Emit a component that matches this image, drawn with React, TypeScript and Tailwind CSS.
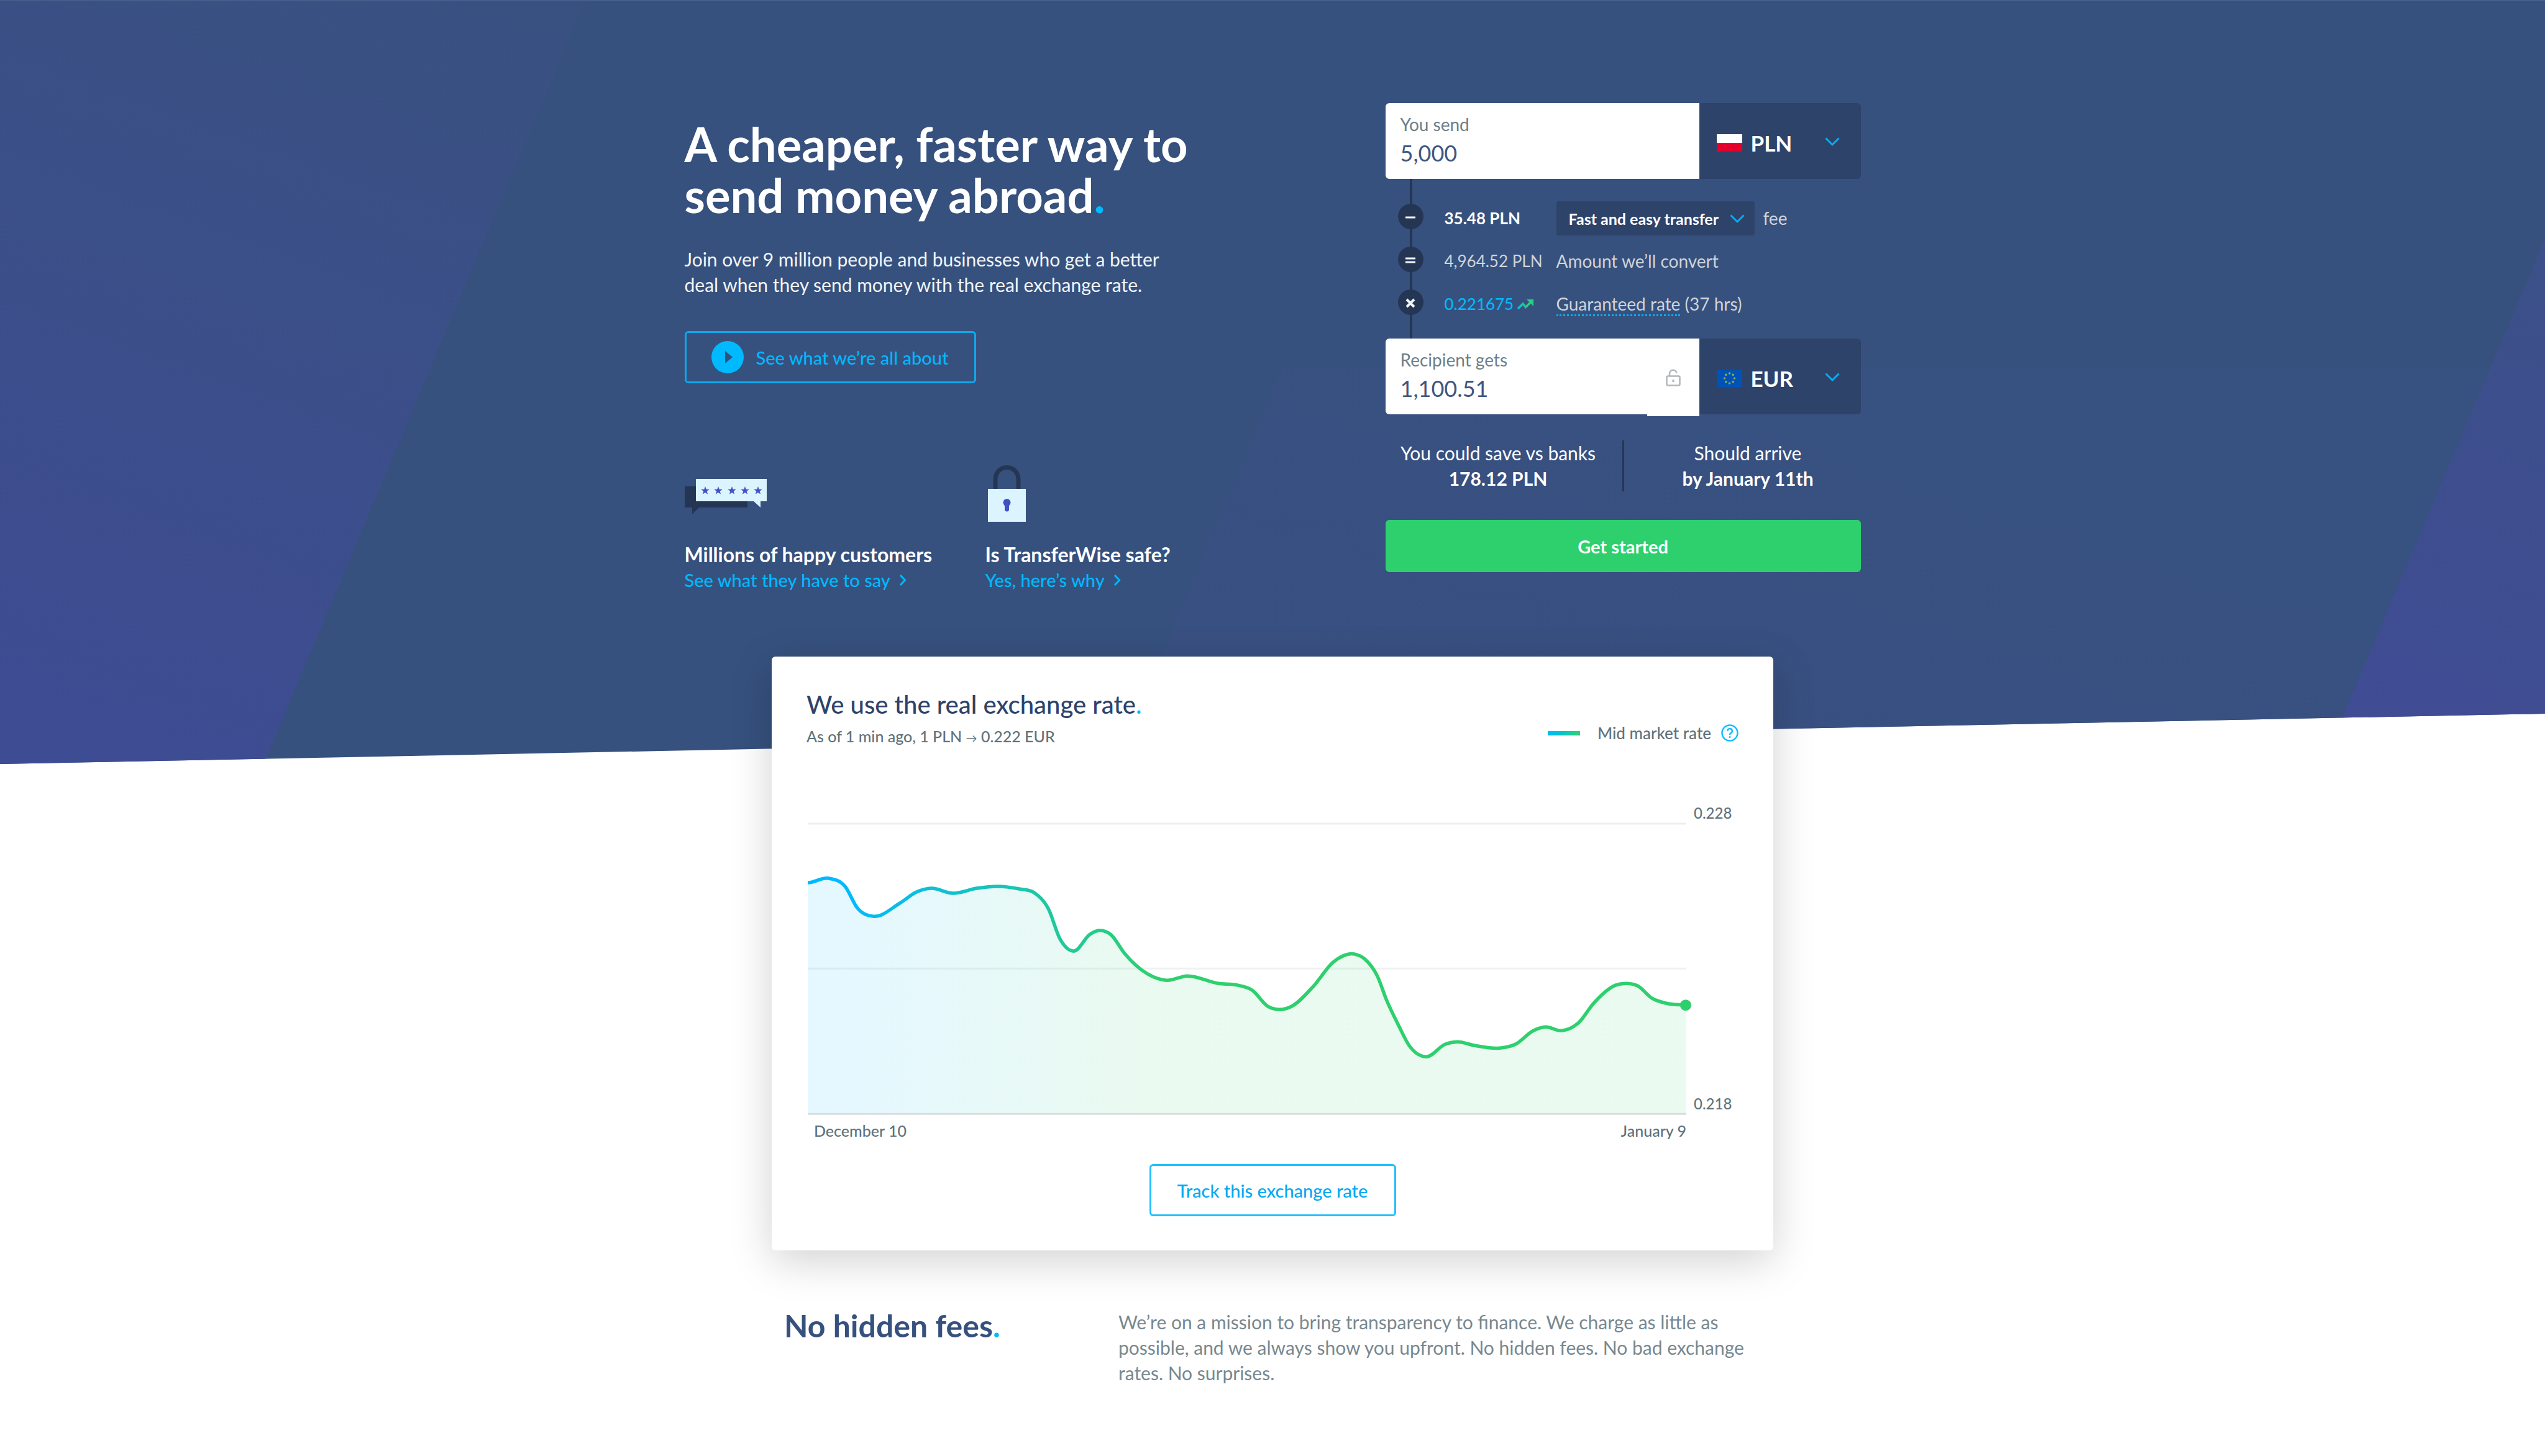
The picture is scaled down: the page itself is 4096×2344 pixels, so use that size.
import React from "react";

const ratePoints: [number, number][] = [
  [0, 95], [34, 88], [60, 101], [80, 136], [105, 149], [148, 128], [175, 110], [198, 104],
  [233, 112], [272, 104], [306, 101], [340, 105], [364, 111], [387, 137], [406, 186], [428, 205],
  [454, 178], [469, 172], [488, 179], [509, 208], [547, 242], [577, 252], [610, 245], [660, 257],
  [692, 260], [715, 268], [740, 294], [758, 299], [778, 294], [813, 262], [845, 223], [880, 210],
  [896, 218], [916, 245], [931, 284], [949, 322], [968, 358], [995, 375], [1025, 355], [1044, 351],
  [1073, 357], [1113, 361], [1138, 355], [1167, 333], [1186, 327], [1213, 333], [1240, 320],
  [1264, 289], [1299, 260], [1317, 257], [1335, 261], [1358, 281], [1381, 289], [1412, 292],
];

/** Draws a smooth curve through the points, with slopes weighted by their spacing in x. */
function smoothPath(points: [number, number][]) {
  const last = points.length - 1;
  const slope = (i: number) => (points[i + 1][1] - points[i][1]) / (points[i + 1][0] - points[i][0]);
  const tangents = points.map((_, i) => {
    if (i === 0) return 0;
    if (i === last) return slope(last - 1);
    const before = points[i][0] - points[i - 1][0];
    const after = points[i + 1][0] - points[i][0];
    return (slope(i - 1) * after + slope(i) * before) / (before + after);
  });
  let d = `M${points[0][0]} ${points[0][1]}`;
  for (let i = 0; i < last; i++) {
    const [x1, y1] = points[i];
    const [x2, y2] = points[i + 1];
    const third = (x2 - x1) / 3;
    d += ` C${(x1 + third).toFixed(1)} ${(y1 + tangents[i] * third).toFixed(1)} ${(x2 - third).toFixed(1)} ${(y2 - tangents[i + 1] * third).toFixed(1)} ${x2} ${y2}`;
  }
  return d;
}

function HeroBackdrop() {
  return (
    <svg
      className="absolute inset-x-0 top-0 -z-10 h-[1230px] w-full"
      viewBox="0 0 4096 1230"
      preserveAspectRatio="none"
      aria-hidden="true"
    >
      <defs>
        <clipPath id="hero-shape">
          <path d="M0 0H4096V1149L0 1230Z" />
        </clipPath>
        <linearGradient id="band-left" gradientUnits="userSpaceOnUse" x1="760" y1="0" x2="300" y2="1260">
          <stop offset="0" stopColor="#395181" />
          <stop offset="1" stopColor="#3e4c93" />
        </linearGradient>
        <linearGradient id="band-right" gradientUnits="userSpaceOnUse" x1="4150" y1="380" x2="3850" y2="1160">
          <stop offset="0" stopColor="#3b5088" />
          <stop offset="1" stopColor="#404c94" />
        </linearGradient>
        <linearGradient id="band-centre" gradientUnits="userSpaceOnUse" x1="2600" y1="594" x2="2400" y2="1180">
          <stop offset="0" stopColor="#375180" />
          <stop offset="1" stopColor="#395082" />
        </linearGradient>
      </defs>
      <g clipPath="url(#hero-shape)">
        <path fill="#36517e" d="M0 0H4096V1230H0Z" />
        <path fill="url(#band-left)" d="M0 0H942L424 1230H0Z" />
        <path fill="url(#band-centre)" d="M2064 594H4009L3740 1230H1796Z" />
        <path fill="url(#band-right)" d="M4096 384V1230H3738Z" />
        <path fill="#4b6390" d="M0 0H4096V1H0Z" />
      </g>
    </svg>
  );
}

function ReviewsIcon() {
  return (
    <svg className="block h-[92px] w-[134px]" viewBox="0 0 134 92" aria-hidden="true">
      <path fill="#253655" d="M0 34H101V68H23L12 79V68H0Z" />
      <path fill="#dcf4ff" d="M18 22H132V58H122V68L111 58H18Z" />
      {[33, 54, 76, 97, 118].map((x) => (
        <path
          key={x}
          fill="#3f51c4"
          transform={`translate(${x} 41)`}
          d="M0 -7L1.7 -2.3 6.7 -2.2 2.7 .9 4.1 5.7 0 2.8 -4.1 5.7 -2.7 .9 -6.7 -2.2 -1.7 -2.3Z"
        />
      ))}
    </svg>
  );
}

function PadlockIcon() {
  return (
    <svg className="block h-[92px] w-[66px]" viewBox="0 0 66 92" aria-hidden="true">
      <path fill="none" stroke="#253655" strokeWidth="7" d="M16 40V22A18.500 18.500 0 0 1 53 22V40" />
      <path fill="#dcf4ff" d="M4 38H65V91H4Z" />
      <circle cx="34.500" cy="60" r="6" fill="#3f51c4" />
      <path stroke="#3f51c4" strokeWidth="7" strokeLinecap="round" d="M34.500 62V71" />
    </svg>
  );
}

function ChevronDown({ className = "" }: { className?: string }) {
  return (
    <svg className={`block h-4 w-6 shrink-0 ${className}`} viewBox="0 0 24 16" fill="none" aria-hidden="true">
      <path d="M1.500 2.500L12 13L22.500 2.500" stroke="#00b0f5" strokeWidth="3" />
    </svg>
  );
}

function ChevronRight() {
  return (
    <svg className="block h-5 w-3 shrink-0" viewBox="0 0 12 20" fill="none" aria-hidden="true">
      <path d="M2 2L9.500 10L2 18" stroke="#00b9ff" strokeWidth="3" />
    </svg>
  );
}

function PolishFlag() {
  return (
    <svg className="block h-7 w-[41px] shrink-0" viewBox="0 0 41 28" aria-hidden="true">
      <path fill="#fff" d="M0 0H41V14H0Z" />
      <path fill="#e4002b" d="M0 14H41V28H0Z" />
    </svg>
  );
}

function EuropeanFlag() {
  return (
    <svg className="block h-7 w-[41px] shrink-0" viewBox="0 0 41 28" aria-hidden="true">
      <path fill="#0052b4" d="M0 0H41V28H0Z" />
      {Array.from({ length: 8 }, (_, i) => (
        <circle
          key={i}
          cx={20.5 + 8 * Math.sin((i * Math.PI) / 4)}
          cy={14 - 8 * Math.cos((i * Math.PI) / 4)}
          r="1.8"
          fill="#8fae45"
        />
      ))}
    </svg>
  );
}

function CurrencyPicker({ id, label, value, children }: { id: string; label: string; value: string; children: React.ReactNode }) {
  return (
    <div className="flex w-[260px] shrink-0 items-center rounded-r-md bg-[#2e4369] pt-1.5 pr-[34px] pl-7">
      {children}
      <select
        id={id}
        aria-label={label}
        defaultValue={value}
        className="ml-3.5 min-w-0 flex-1 appearance-none bg-transparent text-[35px] leading-10 font-bold text-white outline-none"
      >
        <option>PLN</option>
        <option>EUR</option>
      </select>
      <ChevronDown className="mb-1" />
    </div>
  );
}

function AmountInput({ id, label, value }: { id: string; label: string; value: string }) {
  return (
    <div className="flex min-w-0 flex-1 flex-col gap-1.5 py-[18px] pl-6">
      <label htmlFor={id} className="text-[28px] leading-8 text-[#6c7f87]">
        {label}
      </label>
      <input
        id={id}
        defaultValue={value}
        className="h-12 w-full bg-transparent text-[36px] leading-[48px] text-[#3f5680] outline-none"
      />
    </div>
  );
}

function Operator({ d, width }: { d: string; width: number }) {
  return (
    <span className="relative ml-5 flex size-[41px] shrink-0 items-center justify-center rounded-full bg-[#253655]">
      <svg className="size-5" viewBox="0 0 20 20" fill="none" aria-hidden="true">
        <path d={d} stroke="#f2f5f7" strokeWidth={width} />
      </svg>
    </span>
  );
}

function Calculator() {
  return (
    <form className="w-[765px] shrink-0 text-[28px] leading-[41px]" onSubmit={(e) => e.preventDefault()}>
      <div className="flex h-[122px]">
        <div className="flex min-w-0 flex-1 rounded-l-md bg-white">
          <AmountInput id="send" label="You send" value="5,000" />
        </div>
        <CurrencyPicker id="send-currency" label="Currency you send" value="PLN">
          <PolishFlag />
        </CurrencyPicker>
      </div>

      <div className="relative pt-[26px] pb-6 text-[#d0d4da]">
        <div className="absolute inset-y-0 left-[39px] w-1 bg-[#253655]" />
        <div className="flex h-[69px] items-center">
          <Operator d="M2 11H18" width={3} />
          <span className="ml-[34px] w-[180px] pt-1.5 text-[26px] font-bold text-white">35.48 PLN</span>
          <span className="flex items-center pt-1.5">
            <span className="flex h-[55px] w-[319px] items-center rounded-sm bg-[#2e4369] pr-4 pl-5">
              <select
                aria-label="Transfer type"
                className="min-w-0 flex-1 appearance-none bg-transparent text-[25px] leading-8 font-bold text-white outline-none"
              >
                <option>Fast and easy transfer</option>
                <option>Low cost transfer</option>
              </select>
              <ChevronDown />
            </span>
            <span className="ml-3.5">fee</span>
          </span>
        </div>
        <div className="flex h-[69px] items-center">
          <Operator d="M2 8H18M2 14H18" width={3} />
          <span className="ml-[34px] w-[180px] pt-1.5 text-[26px]">4,964.52 PLN</span>
          <span className="pt-1.5">Amount we’ll convert</span>
        </div>
        <div className="flex h-[69px] items-center">
          <Operator d="M4 5L16 17M16 5L4 17" width={4} />
          <span className="ml-[34px] flex w-[180px] items-center gap-1.5 pt-1.5 text-[26px] font-medium text-[#00b9ff]">
            0.221675
            <svg className="h-4 w-[26px] shrink-0" viewBox="0 0 26 16" fill="none" aria-hidden="true">
              <defs>
                <linearGradient id="trend" x1="0" x2="1" y1="0" y2="0">
                  <stop offset="0" stopColor="#0bbfe0" />
                  <stop offset="0.8" stopColor="#2ed06e" />
                </linearGradient>
              </defs>
              <path d="M1 15L9 7L13.500 12.500L22 4" stroke="url(#trend)" strokeWidth="3.500" />
              <path d="M15 0H26V11Z" fill="#27cf80" />
            </svg>
          </span>
          <span className="pt-1.5">
            <a href="#rate" className="inline-block border-b-3 border-dotted border-[#00b0f5] leading-[34px]">
              Guaranteed rate
            </a>{" "}
            (37 hrs)
          </span>
        </div>
      </div>

      <div className="flex h-[122px]">
        <div className="flex min-w-0 flex-1 rounded-l-md bg-white">
          <AmountInput id="receive" label="Recipient gets" value="1,100.51" />
          <button type="button" aria-label="Lock amount" className="-mb-[3px] flex w-[84px] items-center justify-center bg-white">
            <svg className="h-7 w-6" viewBox="0 0 24 28" fill="none" stroke="#b4b7ba" strokeWidth="2.500" aria-hidden="true">
              <rect x="1.500" y="11.500" width="21" height="15" rx="2" />
              <path d="M6 11V7A5.800 5.800 0 0 1 17.500 6.500" />
              <path d="M12 17V21" strokeWidth="3" />
            </svg>
          </button>
        </div>
        <CurrencyPicker id="receive-currency" label="Currency received" value="EUR">
          <EuropeanFlag />
        </CurrencyPicker>
      </div>

      <div className="mt-[42px] flex text-center text-[30px] text-white">
        <p className="flex-1">
          You could save vs banks
          <br />
          <strong>178.12 PLN</strong>
        </p>
        <div className="mx-[18px] w-[3px] bg-[#253655]" />
        <p className="flex-1">
          Should arrive
          <br />
          <strong>by January 11th</strong>
        </p>
      </div>

      <button type="submit" className="mt-[46px] block h-[84px] w-full rounded-md bg-[#2ed06e] text-[29px] font-bold text-white">
        Get started
      </button>
    </form>
  );
}

function RateChart() {
  const line = smoothPath(ratePoints);
  return (
    <div className="mt-[122px] ml-0.5 flex gap-3">
      <div className="min-w-0 flex-1">
        <svg className="block h-auto w-full overflow-visible" viewBox="0 0 1413 467" role="img" aria-label="Mid market rate over the last month">
          <defs>
            <linearGradient id="rate" gradientUnits="userSpaceOnUse" x1="0" x2="560" y1="0" y2="0">
              <stop offset="0" stopColor="#00b9ff" />
              <stop offset="0.1" stopColor="#00b9ff" />
              <stop offset="1" stopColor="#2ed06e" />
            </linearGradient>
          </defs>
          <path d="M0 0H1413" stroke="#eeefef" strokeWidth="3" />
          <path d="M0 233H1413" stroke="#f0f2f2" strokeWidth="3" />
          <path d={`${line} V467 H0 Z`} fill="url(#rate)" fillOpacity="0.1" />
          <path d="M0 467H1413" stroke="#dadedd" strokeWidth="3" />
          <path d={line} fill="none" stroke="url(#rate)" strokeWidth="5.500" />
          <circle cx="1412" cy="292" r="9" fill="#2ed06e" />
        </svg>
        <div className="mt-[11px] flex justify-between pl-2.5">
          <span>December 10</span>
          <span>January 9</span>
        </div>
      </div>
      <div className="-mt-[33px] mb-[43px] flex w-[72px] flex-col justify-between text-[24px]">
        <span>0.228</span>
        <span>0.218</span>
      </div>
    </div>
  );
}

function RateCard() {
  return (
    <section className="rounded-md bg-white px-14 pt-[54px] pb-[55px] text-[25px] leading-8 font-medium text-[#5f727b] shadow-[0_17px_68px_rgba(0,0,0,0.18)]">
      <div className="flex items-end justify-between">
        <div>
          <h2 className="text-[40px] leading-[46px] font-medium text-[#2e4369]">
            We use the real exchange rate<span className="text-[#00b9ff]">.</span>
          </h2>
          <p className="mt-3">
            As of 1 min ago, 1 PLN <span className="text-[18px]">→</span> 0.222 EUR
          </p>
        </div>
        <div className="mb-2 flex items-center">
          <span className="h-[7px] w-[52px] bg-linear-to-r from-[#00b9ff] to-[#2ed06e]" />
          <span className="ml-7 text-[26px]">Mid market rate</span>
          <button type="button" aria-label="About the mid market rate" className="ml-4">
            <svg className="block size-7" viewBox="0 0 28 28" fill="none" stroke="#17bdff" strokeWidth="2.500" aria-hidden="true">
              <circle cx="14" cy="14" r="12.500" />
              <path d="M10.300 11.200A3.800 3.800 0 1 1 15.800 14.200Q14 15.200 14 17" />
              <circle cx="14" cy="20.500" r="1.600" fill="#17bdff" stroke="none" />
            </svg>
          </button>
        </div>
      </div>
      <RateChart />
      <div className="mt-[38px] flex justify-center">
        <button type="button" className="h-[84px] w-[397px] rounded-md border-3 border-[#1fc0ff] text-[29px] leading-[41px] text-[#00a9f4]">
          Track this exchange rate
        </button>
      </div>
    </section>
  );
}

function TrustItem({ icon, title, link }: { icon: React.ReactNode; title: string; link: string }) {
  return (
    <div className="w-[484px]">
      {icon}
      <h3 className="mt-[31px] text-[32px] font-bold text-white">{title}</h3>
      <a href="#more" className="flex items-center gap-3.5 text-[29px] font-medium text-[#00b9ff]">
        {link}
        <ChevronRight />
      </a>
    </div>
  );
}

export default function App() {
  return (
    <div className="relative isolate min-h-screen bg-white font-['Lato',sans-serif]">
      <HeroBackdrop />
      <header className="mx-auto flex w-full max-w-[1893px] items-start justify-between pt-[166px] pb-[103px]">
        <div className="mt-[25px] text-[30px] leading-[41px]">
          <h1 className="text-[76px] leading-[82px] font-bold text-white">
            A cheaper, faster way to
            <br />
            send money abroad<span className="text-[#00b9ff]">.</span>
          </h1>
          <p className="mt-[42px] text-[#f2f5f7]">
            Join over 9 million people and businesses who get a better
            <br />
            deal when they send money with the real exchange rate.
          </p>
          <button
            type="button"
            className="mt-[54px] flex h-[84px] w-[469px] items-center rounded-md border-3 border-[#0da9ec] pl-10 text-[29px] font-medium text-[#00b9ff]"
          >
            <svg className="mr-5 size-[52px]" viewBox="0 0 52 52" aria-hidden="true">
              <circle cx="26" cy="26" r="26" fill="#00b9ff" />
              <path d="M22 16L34 26L22 36Z" fill="#2b5483" />
            </svg>
            See what we’re all about
          </button>
          <div className="mt-[132px] flex">
            <TrustItem icon={<ReviewsIcon />} title="Millions of happy customers" link="See what they have to say" />
            <TrustItem icon={<PadlockIcon />} title="Is TransferWise safe?" link="Yes, here’s why" />
          </div>
        </div>
        <Calculator />
      </header>

      <main className="mx-auto w-full max-w-[1612px]">
        <RateCard />
        <section className="mt-[93px] flex items-start px-5 pb-24">
          <h2 className="w-[538px] shrink-0 text-[50px] leading-[56px] font-bold text-[#37517e]">
            No hidden fees<span className="text-[#00b9ff]">.</span>
          </h2>
          <p className="mt-0.5 text-[30px] leading-[41px] text-[#77888f]">
            We’re on a mission to bring transparency to finance. We charge as little as possible, and we always show you
            upfront. No hidden fees. No bad exchange rates. No surprises.
          </p>
        </section>
      </main>
    </div>
  );
}
